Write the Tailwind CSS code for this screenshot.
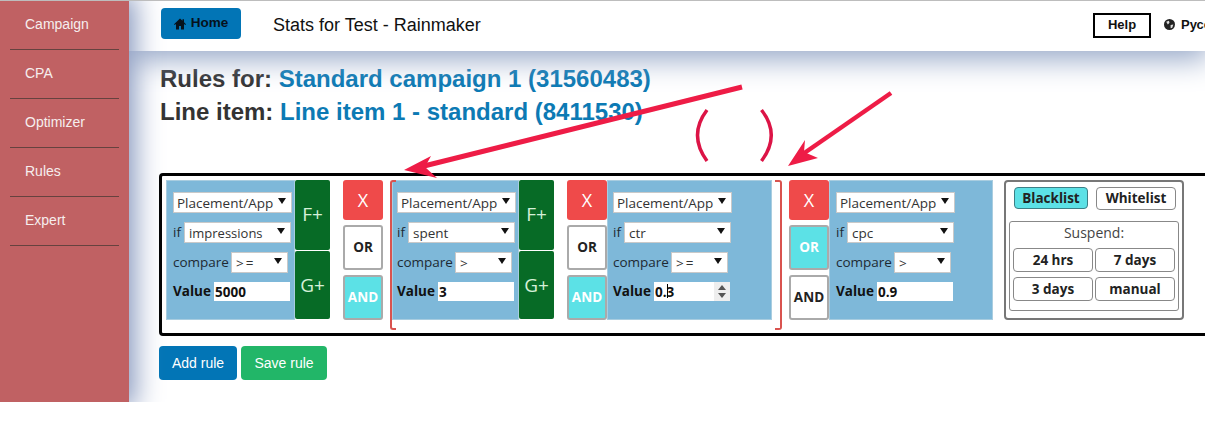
<!DOCTYPE html>
<html lang="en">
<head>
    <meta charset="UTF-8">
    <title>Stats for Test - Rainmaker</title>
    <script src="https://cdn.jsdelivr.net/npm/@tailwindcss/browser@4"></script>
</head>

<body class="bg-white font-['Liberation_Sans',sans-serif]">
    <div class="relative h-[432px] w-[1205px] overflow-hidden">
        <div class="flex h-[402px] overflow-hidden border-t border-[#bdbdbd]">
            <!-- sidebar -->
            <nav class="relative z-20 w-[129px] shrink-0 bg-[#c06163] px-[10px] text-[14px] text-[#f6eeee] shadow-[0_0_26px_6px_#8596bd]">
                <a class="block h-[49px] border-b border-[#66423f] pl-[15px] leading-[47px]">Campaign</a>
                <a class="block h-[49px] border-b border-[#66423f] pl-[15px] leading-[47px]">CPA</a>
                <a class="block h-[49px] border-b border-[#66423f] pl-[15px] leading-[47px]">Optimizer</a>
                <a class="block h-[49px] border-b border-[#66423f] pl-[15px] leading-[47px]">Rules</a>
                <a class="block h-[49px] border-b border-[#66423f] pl-[15px] leading-[47px]">Expert</a>
            </nav>

            <div class="min-w-0 flex-1">
                <!-- header -->
                <header class="relative z-10 flex h-[50px] items-center whitespace-nowrap bg-white pl-[32px] shadow-[0_4px_30px_4px_#93a5c6]">
                    <button class="mt-[-5px] flex h-[31px] w-[80px] shrink-0 items-center justify-center gap-[5px] rounded-[4px] bg-[#0275b6] text-[13.500px] font-bold text-[#06121c]">
                        <svg class="h-[12px] w-[12px]" viewBox="0 0 12 12"><path fill="#06121c" d="M6 .6 0 6.2l.7.8L2 5.9V11.6h3V8h2v3.6h3V5.9L11.300 7l.7-.8-2-1.900V1.300H8.500v1.500z"/></svg>
                        Home
                    </button>
                    <span class="ml-[32px] mt-[-2px] w-[208px] shrink-0 text-[18px] text-[#111]">Stats for Test - Rainmaker</span>
                    <button class="ml-[612px] mt-[-2px] h-[25px] w-[58px] shrink-0 border-2 border-black text-[13px] font-bold text-[#111]">Help</button>
                    <svg class="ml-[13px] mt-[-4px] h-[11px] w-[11px] shrink-0" viewBox="0 0 10 10"><circle cx="5" cy="5" r="5" fill="#222"/><path fill="#ddd" d="M2 2.500 4.500 1.500 5 3.500 3.500 5zM6 5.500l2.500-.5L7.500 8 6 8.500z"/></svg>
                    <span class="ml-[6px] mt-[-3px] text-[13px] font-bold text-[#111]">Русский</span>
                </header>

                <main class="pl-[31px]">
                    <h2 class="mt-[14px] text-[24px] leading-[28px] font-bold whitespace-nowrap text-[#333]">Rules for: <a class="text-[#0c7ab4]">Standard campaign 1 (31560483)</a></h2>
                    <h2 class="mt-[5px] text-[24px] leading-[28px] font-bold whitespace-nowrap text-[#333]">Line item: <a class="text-[#0c7ab4]">Line item 1 - standard (8411530)</a></h2>

                    <!-- rule box -->
                    <div class="ml-[-1px] mt-[47px] flex h-[163px] w-[1100px] rounded-[4px] border-[3px] border-black pl-[4px] pt-[4px] font-['Open_Sans',sans-serif] text-[13.500px] text-[#1d2a33]">
                        <!-- filter 1 -->
                        <div class="h-[140px] w-[129px] border border-[#a9cde0] bg-[#7eb8d9] pl-[6px] pt-[11px]">
                            <div class="relative h-[21px] w-[119px] border border-[#c9c9c9] bg-white pl-[3px] leading-[21px] text-[#333]">Placement/App<i class="absolute right-[5px] top-[5px] border-x-[4px] border-t-[6px] border-x-transparent border-t-[#111]"></i></div>
                            <div class="mt-[9px] flex h-[21px] items-center"><span class="w-[11px]">if</span><div class="relative h-[21px] w-[107px] border border-[#c9c9c9] bg-white pl-[4px] text-[13px] leading-[21px] text-[#333]">impressions<i class="absolute right-[5px] top-[5px] border-x-[4px] border-t-[6px] border-x-transparent border-t-[#111]"></i></div></div>
                            <div class="mt-[9px] flex h-[21px] items-center"><span class="w-[58px]">compare</span><div class="relative h-[21px] w-[57px] border border-[#c9c9c9] bg-white pl-[4px] leading-[21px] tracking-[2px] text-[#333]">&gt;=<i class="absolute right-[5px] top-[5px] border-x-[4px] border-t-[6px] border-x-transparent border-t-[#111]"></i></div></div>
                            <div class="mt-[9px] flex h-[19px] items-center font-bold text-[#111]"><span class="w-[41px]">Value</span><div class="h-[19px] w-[76px] bg-white pl-[1px] leading-[20px]">5000</div></div>
                        </div>
                        <div class="flex w-[35px] flex-col gap-px text-[19px] text-[#d5f0d8]">
                            <button class="h-[70px] rounded-[2px] bg-[#076b26] pb-[1px]">F+</button>
                            <button class="h-[68px] rounded-[2px] bg-[#076b26]">G+</button>
                        </div>
                        <div class="ml-[13px] flex h-[140px] w-[40px] flex-col gap-[5px] text-center">
                            <button class="h-[40px] rounded-[3px] bg-[#ef4a4a] text-[18px] text-white">X</button>
                            <button class="h-[45px] rounded-[3px] border-2 border-[#aaa] bg-white font-bold text-[#222]">OR</button>
                            <button class="h-[45px] rounded-[3px] border-2 border-[#aaa] bg-[#5ce1e6] font-bold text-white">AND</button>
                        </div>

                        <!-- opening bracket -->
                        <div class="relative z-10 ml-[7px] mr-[-4px] h-[150px] w-[6px] rounded-l-[3px] border-y-2 border-l-2 border-[#d9534f]"></div>

                        <!-- filter 2 -->
                        <div class="h-[140px] w-[127px] border border-[#a9cde0] bg-[#7eb8d9] pl-[4px] pt-[11px]">
                            <div class="relative h-[21px] w-[119px] border border-[#c9c9c9] bg-white pl-[3px] leading-[21px] text-[#333]">Placement/App<i class="absolute right-[5px] top-[5px] border-x-[4px] border-t-[6px] border-x-transparent border-t-[#111]"></i></div>
                            <div class="mt-[9px] flex h-[21px] items-center"><span class="w-[11px]">if</span><div class="relative h-[21px] w-[107px] border border-[#c9c9c9] bg-white pl-[4px] leading-[21px] text-[#333]">spent<i class="absolute right-[5px] top-[5px] border-x-[4px] border-t-[6px] border-x-transparent border-t-[#111]"></i></div></div>
                            <div class="mt-[9px] flex h-[21px] items-center"><span class="w-[58px]">compare</span><div class="relative h-[21px] w-[57px] border border-[#c9c9c9] bg-white pl-[4px] leading-[21px] text-[#333]">&gt;<i class="absolute right-[5px] top-[5px] border-x-[4px] border-t-[6px] border-x-transparent border-t-[#111]"></i></div></div>
                            <div class="mt-[9px] flex h-[19px] items-center font-bold text-[#111]"><span class="w-[41px]">Value</span><div class="h-[19px] w-[76px] bg-white pl-[1px] leading-[20px]">3</div></div>
                        </div>
                        <div class="flex w-[35px] flex-col gap-px text-[19px] text-[#d5f0d8]">
                            <button class="h-[70px] rounded-[2px] bg-[#076b26] pb-[1px]">F+</button>
                            <button class="h-[68px] rounded-[2px] bg-[#076b26]">G+</button>
                        </div>
                        <div class="ml-[13px] flex h-[140px] w-[40px] flex-col gap-[5px] text-center">
                            <button class="h-[40px] rounded-[3px] bg-[#ef4a4a] text-[18px] text-white">X</button>
                            <button class="h-[45px] rounded-[3px] border-2 border-[#aaa] bg-white font-bold text-[#222]">OR</button>
                            <button class="h-[45px] rounded-[3px] border-2 border-[#aaa] bg-[#5ce1e6] font-bold text-white">AND</button>
                        </div>

                        <!-- filter 3 -->
                        <div class="h-[140px] w-[165px] border border-[#a9cde0] bg-[#7eb8d9] pl-[5px] pt-[11px]">
                            <div class="relative h-[21px] w-[119px] border border-[#c9c9c9] bg-white pl-[3px] leading-[21px] text-[#333]">Placement/App<i class="absolute right-[5px] top-[5px] border-x-[4px] border-t-[6px] border-x-transparent border-t-[#111]"></i></div>
                            <div class="mt-[9px] flex h-[21px] items-center"><span class="w-[11px]">if</span><div class="relative h-[21px] w-[107px] border border-[#c9c9c9] bg-white pl-[4px] leading-[21px] text-[#333]">ctr<i class="absolute right-[5px] top-[5px] border-x-[4px] border-t-[6px] border-x-transparent border-t-[#111]"></i></div></div>
                            <div class="mt-[9px] flex h-[21px] items-center"><span class="w-[58px]">compare</span><div class="relative h-[21px] w-[57px] border border-[#c9c9c9] bg-white pl-[4px] leading-[21px] tracking-[2px] text-[#333]">&gt;=<i class="absolute right-[5px] top-[5px] border-x-[4px] border-t-[6px] border-x-transparent border-t-[#111]"></i></div></div>
                            <div class="mt-[9px] flex h-[19px] items-center font-bold text-[#111]"><span class="w-[41px]">Value</span>
                                <div class="relative h-[19px] w-[76px] bg-white pl-[1px] leading-[20px]">0.3
                                    <i class="absolute left-[13px] top-[2px] h-[14px] w-px bg-black"></i>
                                    <div class="absolute right-0 top-0 flex h-[19px] w-[16px] flex-col items-center justify-center gap-[3px] bg-[#eeeeee]">
                                        <i class="border-x-[4px] border-b-[5px] border-x-transparent border-b-[#555]"></i>
                                        <i class="border-x-[4px] border-t-[5px] border-x-transparent border-t-[#555]"></i>
                                    </div>
                                </div>
                            </div>
                        </div>

                        <!-- closing bracket -->
                        <div class="ml-[3px] mr-[7px] h-[150px] w-[7px] rounded-r-[3px] border-y-2 border-r-2 border-[#d9534f]"></div>

                        <div class="flex h-[140px] w-[40px] flex-col gap-[5px] text-center">
                            <button class="h-[40px] rounded-[3px] bg-[#ef4a4a] text-[18px] text-white">X</button>
                            <button class="h-[45px] rounded-[3px] border-2 border-[#aaa] bg-[#5ce1e6] font-bold text-white">OR</button>
                            <button class="h-[45px] rounded-[3px] border-2 border-[#aaa] bg-white font-bold text-[#222]">AND</button>
                        </div>

                        <!-- filter 4 -->
                        <div class="h-[140px] w-[164px] border border-[#a9cde0] bg-[#7eb8d9] pl-[6px] pt-[11px]">
                            <div class="relative h-[21px] w-[119px] border border-[#c9c9c9] bg-white pl-[3px] leading-[21px] text-[#333]">Placement/App<i class="absolute right-[5px] top-[5px] border-x-[4px] border-t-[6px] border-x-transparent border-t-[#111]"></i></div>
                            <div class="mt-[9px] flex h-[21px] items-center"><span class="w-[11px]">if</span><div class="relative h-[21px] w-[107px] border border-[#c9c9c9] bg-white pl-[4px] leading-[21px] text-[#333]">cpc<i class="absolute right-[5px] top-[5px] border-x-[4px] border-t-[6px] border-x-transparent border-t-[#111]"></i></div></div>
                            <div class="mt-[9px] flex h-[21px] items-center"><span class="w-[58px]">compare</span><div class="relative h-[21px] w-[57px] border border-[#c9c9c9] bg-white pl-[4px] leading-[21px] text-[#333]">&gt;<i class="absolute right-[5px] top-[5px] border-x-[4px] border-t-[6px] border-x-transparent border-t-[#111]"></i></div></div>
                            <div class="mt-[9px] flex h-[19px] items-center font-bold text-[#111]"><span class="w-[41px]">Value</span><div class="h-[19px] w-[76px] bg-white pl-[1px] leading-[20px]">0.9</div></div>
                        </div>

                        <!-- list / suspend -->
                        <div class="ml-[11px] h-[140px] w-[180px] rounded-[4px] border-2 border-[#777] px-[3px] pt-[5px] font-bold text-[#222]">
                            <div class="flex justify-between pl-[5px] pr-[3px]">
                                <button class="h-[22px] w-[74px] rounded-[4px] border border-[#3c7f86] bg-[#5ce1e6] text-[13.500px] leading-[20px]">Blacklist</button>
                                <button class="h-[23px] w-[80px] rounded-[4px] border border-[#888] bg-white text-[13.500px] leading-[21px]">Whitelist</button>
                            </div>
                            <div class="mt-[11px] h-[90px] w-[170px] rounded-[3px] border border-[#888] px-[3px]">
                                <p class="h-[26px] text-center text-[14px] leading-[21px] font-normal text-[#444]">Suspend:</p>
                                <div class="grid grid-cols-[80px_80px] gap-x-[2px] gap-y-[5px]">
                                    <button class="h-[24px] rounded-[4px] border border-[#888] leading-[21px]">24 hrs</button>
                                    <button class="h-[24px] rounded-[4px] border border-[#888] leading-[21px]">7 days</button>
                                    <button class="h-[24px] rounded-[4px] border border-[#888] leading-[21px]">3 days</button>
                                    <button class="h-[24px] rounded-[4px] border border-[#888] leading-[21px]">manual</button>
                                </div>
                            </div>
                        </div>
                    </div>

                    <div class="ml-[-1px] mt-[10px] flex gap-[4px] text-[14px] text-white">
                        <button class="h-[34px] w-[78px] rounded-[4px] bg-[#0275b6]">Add rule</button>
                        <button class="h-[34px] w-[86px] rounded-[4px] bg-[#22b668]">Save rule</button>
                    </div>
                </main>
            </div>
        </div>

        <!-- annotations drawn over the screenshot -->
        <svg class="absolute left-0 top-0 z-30" width="1205" height="432" fill="none">
            <path d="M742 87 420 167" stroke="#ee1c46" stroke-width="5"/>
            <path fill="#ee1c46" d="M404 170 431 156 425 167 437 178z"/>
            <path d="M891 93 800 156" stroke="#ee1c46" stroke-width="4.500"/>
            <path fill="#ee1c46" d="M788 166 805 140 804 152 818 158z"/>
            <path d="M707 110Q688 135 707 161M761.500 110Q781 135 761.500 161" stroke="#dc1446" stroke-width="3.500"/>
        </svg>
    </div>
</body>

</html>
